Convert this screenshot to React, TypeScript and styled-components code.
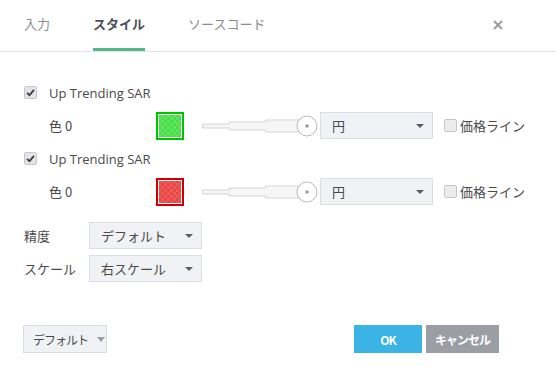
import React from "react";
import styled, { createGlobalStyle } from "styled-components";

const Global = createGlobalStyle`
  html, body { margin: 0; padding: 0; background: #fff; }
  body {
    font-family: "Open Sans", "Noto Sans CJK JP", sans-serif;
    color: #4a4a4a;
    font-size: 13px;
  }
`;

const Dialog = styled.div`
  width: 556px;
  height: 378px;
  display: flex;
  flex-direction: column;
  background: #fff;
  box-sizing: border-box;
`;

const Header = styled.div`
  height: 51px;
  border-bottom: 1px solid #e0e3eb;
  display: flex;
  align-items: stretch;
  padding: 0 24px;
  position: relative;
`;

const Tab = styled.div<{ $active?: boolean }>`
  display: flex;
  align-items: center;
  font-family: "Noto Sans CJK JP", sans-serif;
  font-size: 13px;
  font-weight: ${(p) => (p.$active ? 700 : 400)};
  color: ${(p) => (p.$active ? "#4a4f5a" : "#8a8c93")};
  margin-right: 43px;
  box-shadow: ${(p) => (p.$active ? "inset 0 -3px 0 #53b987" : "none")};
  padding-bottom: 5px;
`;

const Close = styled.div`
  position: absolute;
  right: 52px;
  top: 17px;
  width: 12px;
  height: 12px;
`;

const Body = styled.div`
  flex: 1;
  padding: 24px 24px 0 24px;
  display: flex;
  flex-direction: column;
`;

const Row = styled.div`
  height: 33px;
  display: flex;
  align-items: center;
`;

const CheckBox = styled.div<{ $checked?: boolean }>`
  width: 11px;
  height: 11px;
  border: 1px solid #c4c6cc;
  border-radius: 2px;
  background: ${(p) => (p.$checked ? "#e4e5e8" : "#ececee")};
  display: flex;
  align-items: center;
  justify-content: center;
  flex-shrink: 0;
`;

const Label = styled.span`
  margin-left: 12px;
  font-size: 13px;
  color: #4a4a4a;
`;

const ColorLabel = styled.span`
  margin-left: 25px;
  width: 107px;
  font-family: "Noto Sans CJK JP", sans-serif;
  font-size: 13px;
`;

const Swatch = styled.div<{ $border: string; $fill: string }>`
  width: 24px;
  height: 24px;
  border: 2px solid ${(p) => p.$border};
  box-shadow: inset 0 0 0 1px #fff;
  background-color: ${(p) => p.$fill};
  background-image: conic-gradient(
    rgba(255, 255, 255, 0.08) 0 25%,
    rgba(0, 0, 0, 0.04) 0 50%,
    rgba(255, 255, 255, 0.08) 0 75%,
    rgba(0, 0, 0, 0.04) 0
  );
  background-size: 6px 6px;
  flex-shrink: 0;
`;

const SliderWrap = styled.div`
  margin-left: 18px;
  width: 116px;
  height: 22px;
  display: flex;
  align-items: center;
`;

const Select = styled.div<{ $w: number }>`
  width: ${(p) => p.$w}px;
  height: 25px;
  box-sizing: content-box;
  border: 1px solid #dcdee3;
  background: #f1f2f5;
  display: flex;
  align-items: center;
  justify-content: space-between;
  padding: 0 8px 0 11px;
  font-family: "Noto Sans CJK JP", sans-serif;
  font-size: 13px;
  color: #4a4a4a;
  flex-shrink: 0;
`;

const PlotSelect = styled(Select)`
  margin-left: 2px;
`;

const Caret = styled.span`
  width: 0;
  height: 0;
  border-left: 4px solid transparent;
  border-right: 4px solid transparent;
  border-top: 4px solid #5a5d66;
`;

const PriceLine = styled.div`
  margin-left: 11px;
  display: flex;
  align-items: center;
`;

const PriceText = styled.span`
  margin-left: 3px;
  font-family: "Noto Sans CJK JP", sans-serif;
  font-size: 13px;
`;

const SettingsRow = styled(Row)`
  font-family: "Noto Sans CJK JP", sans-serif;
`;

const SettingLabel = styled.span`
  width: 65px;
  font-size: 13px;
`;

const Gap = styled.div`
  height: 11px;
`;

const Footer = styled.div`
  display: flex;
  align-items: center;
  padding: 0 57px 25px 23px;
`;

const DefaultBtn = styled.div`
  height: 28px;
  width: 84px;
  border: 1px solid #dcdee3;
  background: #f1f2f5;
  display: flex;
  align-items: center;
  padding-left: 9px;
  box-sizing: border-box;
  font-family: "Noto Sans CJK JP", sans-serif;
  font-size: 12px;
  letter-spacing: -1px;
  white-space: nowrap;
  color: #4a4a4a;
  gap: 9px;
`;

const GrayCaret = styled.span`
  width: 0;
  height: 0;
  border-left: 4px solid transparent;
  border-right: 4px solid transparent;
  border-top: 5px solid #9b9ea5;
`;

const Spacer = styled.div`
  flex: 1;
`;

const ActionBtn = styled.div<{ $bg: string; $w: number }>`
  width: ${(p) => p.$w}px;
  height: 28px;
  background: ${(p) => p.$bg};
  color: #fff;
  font-family: "Noto Sans CJK JP", sans-serif;
  font-weight: 700;
  font-size: 12px;
  letter-spacing: -1px;
  white-space: nowrap;
  display: flex;
  align-items: center;
  justify-content: center;
  margin-left: 4px;
`;

const Check = () => (
  <svg width="9" height="9" viewBox="0 0 9 9">
    <path d="M1 4.8 L3.5 7.2 L8 1.8" stroke="#3a3d44" strokeWidth="1.8" fill="none" />
  </svg>
);

const Slider = () => (
  <svg width="116" height="22" viewBox="0 0 116 22">
    <path
      d="M0.5 9 H27.5 V7 H63.5 V5 H100 V17 H63.5 V15 H27.5 V13 H0.5 Z"
      fill="#f6f6f7"
      stroke="#d4d5d9"
      strokeWidth="1"
    />
    <circle cx="105" cy="11" r="10" fill="#fff" stroke="#b5b8bf" strokeWidth="1" />
    <circle cx="105" cy="11" r="1.8" fill="#9a9da5" />
  </svg>
);

const PlotRow: React.FC<{ border: string; fill: string }> = ({ border, fill }) => (
  <>
    <Row>
      <CheckBox $checked>
        <Check />
      </CheckBox>
      <Label>Up Trending SAR</Label>
    </Row>
    <Row>
      <ColorLabel>色 0</ColorLabel>
      <Swatch $border={border} $fill={fill} />
      <SliderWrap>
        <Slider />
      </SliderWrap>
      <PlotSelect $w={92}>
        <span>円</span>
        <Caret />
      </PlotSelect>
      <PriceLine>
        <CheckBox />
        <PriceText>価格ライン</PriceText>
      </PriceLine>
    </Row>
  </>
);

export default function App() {
  return (
    <Dialog>
      <Global />
      <Header>
        <Tab>入力</Tab>
        <Tab $active>スタイル</Tab>
        <Tab>ソースコード</Tab>
        <Close>
          <svg width="12" height="12" viewBox="0 0 12 12">
            <path d="M2 2 L10 10 M10 2 L2 10" stroke="#9a9ca3" strokeWidth="2" />
          </svg>
        </Close>
      </Header>
      <Body>
        <PlotRow border="#00c400" fill="#4ee44e" />
        <PlotRow border="#cc0000" fill="#f04a4a" />
        <Gap />
        <SettingsRow>
          <SettingLabel>精度</SettingLabel>
          <Select $w={92}>
            <span>デフォルト</span>
            <Caret />
          </Select>
        </SettingsRow>
        <SettingsRow>
          <SettingLabel>スケール</SettingLabel>
          <Select $w={92}>
            <span>右スケール</span>
            <Caret />
          </Select>
        </SettingsRow>
      </Body>
      <Footer>
        <DefaultBtn>
          <span>デフォルト</span>
          <GrayCaret />
        </DefaultBtn>
        <Spacer />
        <ActionBtn $bg="#3bb3e4" $w={68}>OK</ActionBtn>
        <ActionBtn $bg="#9b9ea5" $w={73}>キャンセル</ActionBtn>
      </Footer>
    </Dialog>
  );
}
